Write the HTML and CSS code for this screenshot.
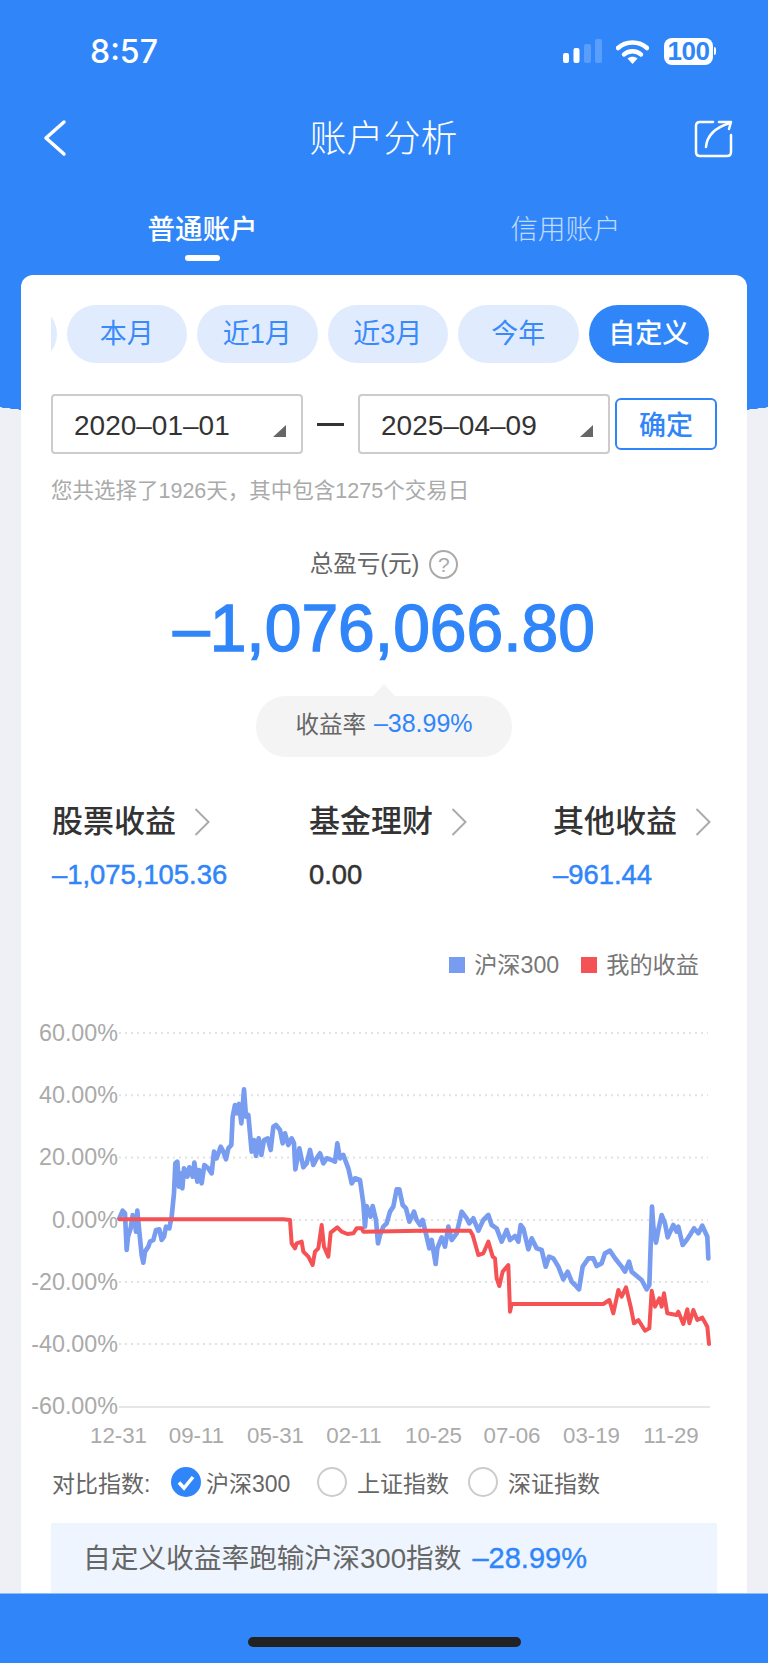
FILE: index.html
```html
<!DOCTYPE html>
<html lang="zh">
<head>
    <meta charset="UTF-8">
    <meta name="viewport" content="width=device-width, initial-scale=1.0">
    <title>账户分析</title>
    <link rel="stylesheet" href="styles.css">
</head>
<body>
    <!-- 顶部蓝色区域 -->
    <header class="hero">
        <div class="status">
            <span class="time">8:57</span>
            <div class="status-icons">
                <svg class="signal" width="39" height="24" viewBox="0 0 39 24">
                    <rect x="0" y="14" width="6" height="10" rx="2" fill="#fff"/>
                    <rect x="10.500" y="9" width="6" height="15" rx="2" fill="#fff"/>
                    <rect x="21" y="5" width="7" height="19" rx="2" fill="#fff" opacity=".2"/>
                    <rect x="32" y="0" width="7" height="24" rx="2" fill="#fff" opacity=".2"/>
                </svg>
                <svg class="wifi" width="33" height="25" viewBox="0 0 33 25">
                    <path d="M2 9 C10 1.500 23 1.500 31 9" fill="none" stroke="#fff" stroke-width="4.500" stroke-linecap="round"/>
                    <path d="M8 15.500 C12.500 11 20.500 11 25 15.500" fill="none" stroke="#fff" stroke-width="4.500" stroke-linecap="round"/>
                    <path d="M11.500 19.500 C14.500 17 18.500 17 21.500 19.500 L16.500 25 Z" fill="#fff"/>
                </svg>
                <div class="battery"><span>100</span></div>
                <i class="battery-nub"></i>
            </div>
        </div>
        <nav class="nav">
            <svg width="24" height="40" viewBox="0 0 24 40">
                <path d="M21 4 L3 20 L21 36" fill="none" stroke="#fff" stroke-width="3.500" stroke-linecap="round" stroke-linejoin="round"/>
            </svg>
            <h1 class="title">账户分析</h1>
            <svg width="40" height="40" viewBox="0 0 40 40">
                <path d="M19 4 H6 Q2 4 2 8 V34 Q2 38 6 38 H33 Q37 38 37 34 V17" fill="none" stroke="#fff" stroke-width="2.500" stroke-linecap="round"/>
                <path d="M12 29 C13 17 23 9 36 5" fill="none" stroke="#fff" stroke-width="2.500" stroke-linecap="round"/>
                <path d="M25 4 L37 4 L35 11" fill="none" stroke="#fff" stroke-width="2.500" stroke-linecap="round" stroke-linejoin="round"/>
            </svg>
        </nav>
        <div class="tabs">
            <div class="tab active">普通账户<i></i></div>
            <div class="tab">信用账户</div>
        </div>
    </header>

    <main class="card">
        <!-- 时间段 -->
        <div class="pills">
            <span class="pill"></span>
            <span class="pill">本月</span>
            <span class="pill">近1月</span>
            <span class="pill">近3月</span>
            <span class="pill">今年</span>
            <span class="pill current">自定义</span>
        </div>
        <div class="dates">
            <div class="date-box">2020–01–01<i class="caret"></i></div>
            <div class="date-sep"><i></i></div>
            <div class="date-box">2025–04–09<i class="caret"></i></div>
            <div class="ok">确定</div>
        </div>
        <p class="hint">您共选择了1926天，其中包含1275个交易日</p>

        <!-- 总盈亏 -->
        <div class="total-label">总盈亏(元)<span class="help">?</span></div>
        <div class="total">–1,076,066.80</div>
        <div class="bubble">收益率<b>–38.99%</b></div>

        <div class="stats">
            <div>
                <div class="stat-title">股票收益<svg class="arrow" width="16" height="28" viewBox="0 0 16 28"><path d="M1.500 1 L14.500 14 L1.500 27" fill="none" stroke="#aaa" stroke-width="2"/></svg></div>
                <div class="stat-value blue">–1,075,105.36</div>
            </div>
            <div>
                <div class="stat-title">基金理财<svg class="arrow" width="16" height="28" viewBox="0 0 16 28"><path d="M1.500 1 L14.500 14 L1.500 27" fill="none" stroke="#aaa" stroke-width="2"/></svg></div>
                <div class="stat-value">0.00</div>
            </div>
            <div>
                <div class="stat-title">其他收益<svg class="arrow" width="16" height="28" viewBox="0 0 16 28"><path d="M1.500 1 L14.500 14 L1.500 27" fill="none" stroke="#aaa" stroke-width="2"/></svg></div>
                <div class="stat-value blue">–961.44</div>
            </div>
        </div>

        <!-- 图表 -->
        <div class="legend">
            <span class="legend-item"><i class="sq-blue"></i>沪深300</span>
            <span class="legend-item"><i class="sq-red"></i>我的收益</span>
        </div>
        <svg class="chart" width="726" height="460" viewBox="21 990 726 460">
            <g class="grid">
                <line x1="119" y1="1033" x2="708" y2="1033"/>
                <line x1="119" y1="1095.300" x2="708" y2="1095.300"/>
                <line x1="119" y1="1157.500" x2="708" y2="1157.500"/>
                <line x1="119" y1="1220" x2="708" y2="1220"/>
                <line x1="119" y1="1282" x2="708" y2="1282"/>
                <line x1="119" y1="1344" x2="708" y2="1344"/>
            </g>
            <line class="axis" x1="119" y1="1407" x2="710" y2="1407"/>
            <g class="y-labels">
                <text x="118" y="1041">60.00%</text>
                <text x="118" y="1103">40.00%</text>
                <text x="118" y="1165">20.00%</text>
                <text x="118" y="1228">0.00%</text>
                <text x="118" y="1290">-20.00%</text>
                <text x="118" y="1352">-40.00%</text>
                <text x="118" y="1414">-60.00%</text>
            </g>
            <g class="x-labels">
                <text x="118.500" y="1443">12-31</text>
                <text x="196.500" y="1443">09-11</text>
                <text x="275.500" y="1443">05-31</text>
                <text x="354" y="1443">02-11</text>
                <text x="433.500" y="1443">10-25</text>
                <text x="512" y="1443">07-06</text>
                <text x="591.500" y="1443">03-19</text>
                <text x="671" y="1443">11-29</text>
            </g>
            <g transform="translate(100 1080) scale(.33333)">
                <polyline class="line-blue" points="58,415 68,392 75,400 80,510 84,470 92,445 98,405 104,420 108,455 112,392 118,455 125,525 130,548 135,515 145,500 150,485 160,480 168,450 178,448 185,480 192,470 198,440 208,445 215,410 222,340 226,250 232,245 237,320 242,280 247,325 252,265 262,290 268,262 278,290 283,248 292,305 297,270 305,310 313,255 325,265 335,280 342,215 350,235 362,200 370,215 378,238 385,205 394,195 398,110 405,75 410,100 417,72 424,130 432,28 438,110 445,105 455,215 462,180 468,228 476,175 484,225 492,180 503,175 512,210 520,140 528,135 540,150 548,190 555,160 565,195 575,175 582,190 586,268 598,205 610,262 620,250 630,210 640,255 650,235 660,220 670,250 680,235 695,240 705,245 712,190 720,235 730,225 745,265 755,310 765,295 780,300 790,370 795,440 800,378 812,410 818,378 828,420 834,490 840,465 850,440 860,430 870,395 880,380 890,328 898,328 908,375 918,385 928,425 942,395 950,420 960,435"/>
            </g>
            <g transform="translate(400 1160) scale(.33333)">
                <polyline class="line-blue" points="60,190 68,180 80,230 88,265 95,240 107,312 112,265 125,232 135,260 145,200 155,240 170,220 185,155 200,175 208,190 220,175 235,212 250,180 265,165 275,195 290,205 305,245 320,210 330,240 345,228 355,245 362,195 370,205 385,268 395,235 410,265 425,270 437,320 447,290 460,295 475,320 490,358 503,335 515,365 525,375 537,388 548,320 565,295 580,295 590,318 605,310 615,280 630,272 645,295 665,320 675,335 687,305 695,335 715,352 725,360 740,388 748,375 756,140 760,200 768,248 775,210 785,165 795,190 803,232 820,195 830,215 835,200 848,255 860,240 870,225 882,205 895,220 907,197 922,230 925,295"/>
            </g>
            <g transform="translate(100 1080) scale(.33333)">
                <polyline class="line-red" points="58,418 550,418 570,420 575,490 585,505 590,490 605,485 610,515 625,530 638,555 645,515 655,505 665,435 672,500 685,530 692,458 712,442 725,455 742,462 760,460 770,445 785,445 790,455 960,452"/>
            </g>
            <g transform="translate(400 1160) scale(.33333)">
                <polyline class="line-red" points="60,212 210,212 218,225 235,285 250,280 265,245 278,290 285,295 290,355 298,378 308,335 325,315 330,455 335,432 610,432 628,420 640,460 655,390 665,410 678,382 692,440 702,490 715,480 735,512 748,505 755,392 765,440 778,415 785,440 792,400 802,460 830,465 835,455 850,492 862,448 868,490 880,450 892,480 907,473 922,500 927,552"/>
            </g>
        </svg>

        <!-- 对比指数 -->
        <div class="compare">
            <span class="compare-label">对比指数:</span>
            <span class="radio-item">
                <svg width="30" height="30" viewBox="0 0 30 30"><circle cx="15" cy="15" r="15" fill="#3086f9"/><path d="M8 15.500 L13 21 L22 10" fill="none" stroke="#fff" stroke-width="3.500"/></svg>沪深300
            </span>
            <span class="radio-item"><i class="radio"></i>上证指数</span>
            <span class="radio-item"><i class="radio"></i>深证指数</span>
        </div>
        <div class="banner">自定义收益率跑输沪深300指数<b>–28.99%</b></div>
    </main>

    <footer class="bottom"><i></i></footer>
</body>
</html>
```

FILE: styles.css
```css
*{
    margin: 0;
    padding: 0;
    box-sizing: border-box;
}
body{
    width: 768px;
    height: 1663px;
    overflow: hidden;
    display: flex;
    flex-direction: column;
    background-color: #eef0f5;
    font-family: "Liberation Sans", "Noto Sans CJK SC", sans-serif;
    color: #333;
}
i{
    display: block;
    font-style: normal;
}
.blue{
    color: #3086f9;
}
/* 顶部 */
.hero{
    flex: none;
    height: 428px;
    padding-top: 35px;
    color: #fff;
    background:
        radial-gradient(600px 89px at 50% 339px, #3086f9 99.8%, transparent 100%),
        linear-gradient(#3086f9, #3086f9) 0 0 / 100% 339px no-repeat;
}
.status{
    height: 32px;
    display: flex;
    align-items: center;
    justify-content: space-between;
    padding: 0 52px 0 90px;
}
.time{
    font-family: Inter, sans-serif;
    font-size: 32px;
    font-weight: 500;
}
.status-icons{
    display: flex;
    align-items: center;
}
.wifi{
    margin-left: 14px;
}
.battery{
    margin-left: 15px;
    width: 49px;
    height: 27px;
    border-radius: 8px;
    background-color: #fff;
    color: #3086f9;
    font-size: 26px;
    font-weight: bold;
    line-height: 27px;
    text-align: center;
    letter-spacing: -.5px;
}
.battery-nub{
    width: 2px;
    height: 8px;
    margin-left: 1px;
    border-radius: 0 2px 2px 0;
    background-color: #fff;
}
.nav{
    height: 40px;
    margin-top: 51px;
    display: flex;
    align-items: center;
    justify-content: space-between;
    padding: 0 34px 0 43px;
}
.title{
    margin: 4px 0 0 6px;
    font-size: 37px;
    font-weight: 300;
    line-height: 40px;
}
.tabs{
    margin-top: 55px;
    padding: 0 21px;
    display: grid;
    grid-template-columns: 1fr 1fr;
}
.tab{
    font-size: 27.500px;
    line-height: 30px;
    text-align: center;
    opacity: .7;
    font-weight: 300;
    padding-top: 2px;
}
.tab.active{
    opacity: 1;
    font-weight: 500;
}
.tab i{
    width: 35px;
    height: 6px;
    margin: 10px auto 0;
    border-radius: 3px;
    background-color: #fff;
}
/* 白色卡片 */
.card{
    flex: 1;
    min-height: 0;
    margin: -153px 21px 0;
    padding: 30px 30px 0;
    border-radius: 12px 12px 0 0;
    background-color: #fff;
    overflow: hidden;
    display: flex;
    flex-direction: column;
}
.pills{
    flex: none;
    display: flex;
    gap: 10px;
    overflow: hidden;
}
.pill{
    flex: none;
    width: 120.500px;
    height: 58px;
    border-radius: 29px;
    background-color: #e0ecfe;
    color: #3a8afa;
    font-size: 27px;
    line-height: 58px;
    text-align: center;
}
.pill:first-child{
    margin-left: -115px;
}
.pill.current{
    background-color: #3086f9;
    color: #fff;
    font-weight: 500;
}
.dates{
    flex: none;
    margin-top: 31px;
    display: flex;
    align-items: center;
}
.date-box{
    width: 252px;
    height: 60px;
    padding: 3px 15px 0 21px;
    display: flex;
    align-items: center;
    justify-content: space-between;
    border: 2px solid #ccc;
    border-radius: 4px;
    font-size: 28px;
    color: #333;
}
.caret{
    align-self: flex-end;
    margin-bottom: 15px;
    border-style: solid;
    border-width: 0 0 12px 13px;
    border-color: transparent transparent #666 transparent;
}
.date-sep{
    width: 55px;
}
.date-sep i{
    width: 27px;
    height: 3px;
    margin: 0 auto;
    background-color: #333;
}
.ok{
    width: 102px;
    height: 52px;
    margin-left: 5px;
    border: 2px solid #3086f9;
    border-radius: 6px;
    color: #3086f9;
    font-size: 27px;
    font-weight: 500;
    line-height: 52px;
    text-align: center;
}
.hint{
    flex: none;
    margin-top: 22px;
    font-size: 21.500px;
    line-height: 30px;
    color: #aaa;
}
.total-label{
    flex: none;
    margin-top: 43px;
    display: flex;
    justify-content: center;
    align-items: center;
    gap: 10px;
    font-size: 23.500px;
    line-height: 30px;
    color: #666;
}
.help{
    width: 29px;
    height: 29px;
    border: 2px solid #aaa;
    border-radius: 50%;
    color: #aaa;
    font-size: 21px;
    line-height: 25px;
    text-align: center;
}
.total{
    flex: none;
    margin-top: 14px;
    font-size: 66px;
    line-height: 70px;
    text-align: center;
    color: #3086f9;
    -webkit-text-stroke: 1.400px currentColor;
}
.bubble{
    flex: none;
    position: relative;
    width: 256px;
    height: 61px;
    margin: 33px auto 0;
    padding-bottom: 7px;
    border-radius: 30px;
    background-color: #f4f4f5;
    display: flex;
    align-items: center;
    justify-content: center;
    gap: 8px;
    font-size: 23.500px;
    color: #666;
}
.bubble::before{
    content: "";
    position: absolute;
    left: 117px;
    top: -12px;
    border-style: solid;
    border-width: 0 11px 12px;
    border-color: transparent transparent #f4f4f5 transparent;
}
.bubble b{
    font-size: 25px;
    font-weight: normal;
    color: #3086f9;
}
.stats{
    flex: none;
    margin-top: 47px;
    padding-left: 1px;
    display: grid;
    grid-template-columns: 257px 244px 1fr;
}
.stat-title{
    display: flex;
    align-items: center;
    gap: 18px;
    font-size: 31px;
    font-weight: 500;
    line-height: 36px;
    color: #333;
}
.stat-value{
    margin-top: 18px;
    font-size: 27.400px;
    line-height: 34px;
    -webkit-text-stroke: .5px currentColor;
}
.legend{
    flex: none;
    margin-top: 58px;
    padding-right: 18px;
    display: flex;
    justify-content: flex-end;
    gap: 22px;
    font-size: 23.200px;
    line-height: 30px;
    color: #777;
}
.legend-item{
    display: flex;
    align-items: center;
    gap: 9px;
}
.legend-item i{
    width: 16px;
    height: 16px;
}
.sq-blue{
    background-color: #789cf0;
}
.sq-red{
    background-color: #f45255;
}
.chart{
    flex: none;
    display: block;
    margin: 10px -30px 0;
}
.grid line{
    stroke: #e2e2e2;
    stroke-width: 2;
    stroke-dasharray: 2 4;
}
.axis{
    stroke: #e6e6e6;
    stroke-width: 2;
}
.y-labels text{
    font-size: 23.300px;
    fill: #aaa;
    text-anchor: end;
}
.x-labels text{
    font-size: 22.300px;
    fill: #aaa;
    text-anchor: middle;
}
.line-blue,
.line-red{
    fill: none;
    stroke-linejoin: round;
    stroke-linecap: round;
}
.line-blue{
    stroke: #789cf0;
    stroke-width: 14;
}
.line-red{
    stroke: #f45255;
    stroke-width: 12;
}
.compare{
    flex: none;
    margin-top: 15px;
    padding-left: 1px;
    height: 32px;
    display: grid;
    grid-template-columns: 119px 146px 151px 1fr;
    align-items: center;
    font-size: 23px;
    color: #666;
}
.radio-item{
    display: flex;
    align-items: center;
    gap: 5px;
}
.radio{
    width: 30px;
    height: 30px;
    margin-right: 5px;
    border: 2px solid #ccc;
    border-radius: 50%;
}
.banner{
    flex: 1;
    margin-top: 26px;
    padding: 20px 0 0 32px;
    background-color: #eef5ff;
    font-size: 27.700px;
    line-height: 30px;
    color: #666;
}
.banner b{
    margin-left: 11px;
    font-size: 29px;
    font-weight: normal;
    color: #3086f9;
    -webkit-text-stroke: .4px currentColor;
}
/* 底部 */
.bottom{
    flex: none;
    height: 70px;
    padding-top: 43px;
    background-color: #3086f9;
    border-top: 1px solid #8fbcf9;
}
.bottom i{
    width: 273px;
    height: 10px;
    margin: 0 auto;
    border-radius: 5px;
    background-color: #222;
}
```
